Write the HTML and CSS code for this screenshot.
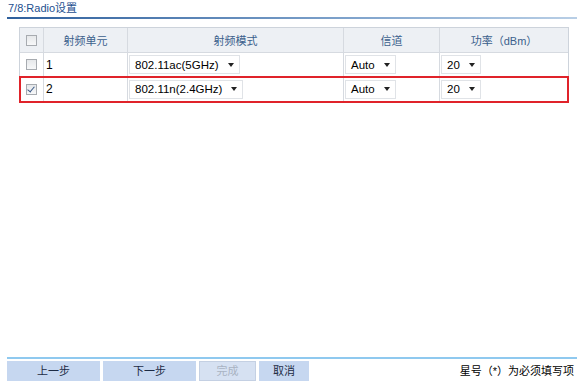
FILE: index.html
```html
<!DOCTYPE html>
<html lang="zh-CN">

<head>
    <meta charset="UTF-8">
    <title>Radio设置</title>
    <link rel="stylesheet" href="styles.css">
</head>

<body>
    <div class="page">
        <div class="title">7/8:Radio设置</div>

        <div class="grid">
            <!-- header -->
            <div class="row head">
                <div class="cell center"><span class="check"></span></div>
                <div class="cell center">射频单元</div>
                <div class="cell center">射频模式</div>
                <div class="cell center">信道</div>
                <div class="cell center">功率（dBm）</div>
            </div>

            <!-- Radio 1 -->
            <div class="row">
                <div class="cell center"><span class="check"></span></div>
                <div class="cell num">1</div>
                <div class="cell"><span class="select">802.11ac(5GHz)<i class="arrow"></i></span></div>
                <div class="cell"><span class="select">Auto<i class="arrow"></i></span></div>
                <div class="cell"><span class="select">20<i class="arrow"></i></span></div>
            </div>

            <!-- Radio 2 (marked) -->
            <div class="row marked">
                <div class="cell center"><span class="check checked"></span></div>
                <div class="cell num">2</div>
                <div class="cell"><span class="select">802.11n(2.4GHz)<i class="arrow"></i></span></div>
                <div class="cell"><span class="select">Auto<i class="arrow"></i></span></div>
                <div class="cell"><span class="select">20<i class="arrow"></i></span></div>
            </div>
        </div>

        <div class="footer">
            <div class="buttons">
                <span class="btn wide">上一步</span>
                <span class="btn wide">下一步</span>
                <span class="btn disabled">完成</span>
                <span class="btn">取消</span>
            </div>
            <div class="note">星号（*）为必须填写项</div>
        </div>
    </div>
</body>

</html>
```

FILE: styles.css
```css
body {
    margin: 0;
    font-family: "Liberation Sans", "Noto Sans CJK SC", sans-serif;
    font-size: 11px;
    color: #000;
    background: #fff;
}

.page {
    height: 384px;
    display: flex;
    flex-direction: column;
    padding: 0 4px 0 7px;
    box-sizing: border-box;
}

.title {
    height: 17px;
    line-height: 17px;
    padding-left: 1px;
    color: #1d4f8f;
    font-size: 11px;
    border-bottom: 2px solid #3d6ea8;
    border-image: linear-gradient(to right, #2e5f9c, #7fa3cc 60%, #b9cfe6) 1;
}

.grid {
    margin: 8px 0 0 12px;
    width: 548px;
    border: 1px solid #cdd3db;
    border-bottom: none;
}

.row {
    display: grid;
    grid-template-columns: 23px 84px 216px 96px 1fr;
    height: 23px;
    border-bottom: 1px solid #d6dae0;
}

.row.head {
    height: 24px;
    background: #edf0f4;
    color: #3b5f8c;
}

.row.marked {
    height: 24px;
    outline: 2px solid #e0232a;
    outline-offset: -1px;
}

.cell {
    display: flex;
    align-items: center;
    border-left: 1px solid #d6dae0;
    padding-left: 1px;
}

.cell:first-child {
    border-left: none;
}

.cell.center {
    justify-content: center;
    padding-left: 0;
}

.cell.num {
    padding-left: 2px;
    font-size: 12px;
}

.check {
    width: 9px;
    height: 9px;
    border: 1px solid #a7abb0;
    background: linear-gradient(#e6e8ea, #f7f8f9);
    position: relative;
}

.check.checked::after {
    content: "";
    position: absolute;
    left: 2px;
    top: 0;
    width: 3px;
    height: 6px;
    border: solid #3a5a88;
    border-width: 0 1px 1px 0;
    transform: rotate(40deg);
}

.select {
    display: inline-flex;
    align-items: center;
    height: 17px;
    padding: 0 5px 0 5px;
    border: 1px solid #e0e3e7;
    background: #fff;
    font-size: 11.5px;
    white-space: nowrap;
}

.arrow {
    margin-left: 9px;
    width: 0;
    height: 0;
    border-left: 3px solid transparent;
    border-right: 3px solid transparent;
    border-top: 4px solid #222;
}

.footer {
    margin-top: auto;
    margin-bottom: 3px;
    display: flex;
    align-items: flex-end;
    justify-content: space-between;
    border-top: 2px solid #8fc9ef;
    padding-top: 2px;
}

.buttons {
    display: flex;
    gap: 3px;
}

.btn {
    height: 20px;
    line-height: 20px;
    width: 50px;
    text-align: center;
    background: #c6d7f0;
    color: #1c2b44;
}

.btn.wide {
    width: 93px;
}

.btn.disabled {
    width: 55px;
    height: 18px;
    line-height: 18px;
    border: 1px solid #c4d0e3;
    background: #d6e1f2;
    color: #a9b3c2;
}

.note {
    line-height: 20px;
    padding-right: 3px;
}
```
